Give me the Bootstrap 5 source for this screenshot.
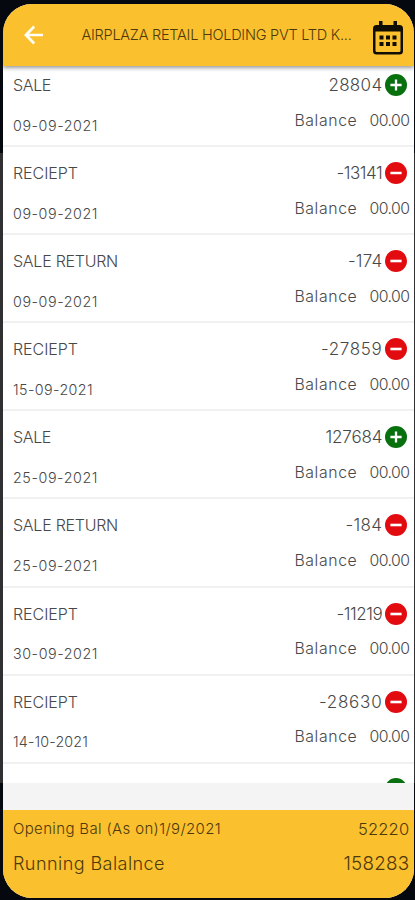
<!DOCTYPE html>
<html lang="en">
<head>
<meta charset="utf-8">
<meta name="viewport" content="width=device-width, initial-scale=1">
<title>Ledger</title>
<link href="https://cdn.jsdelivr.net/npm/bootstrap@5.3.0/dist/css/bootstrap.min.css" rel="stylesheet">
<style>
body{background:linear-gradient(#05080f 0 153px,#303033 153px 783px,#05080f 783px);height:900px;overflow:hidden;font-family:Inter,"Open Sans",sans-serif;font-weight:300;color:#484848}
.screen{height:894.5px;margin:3.5px .6px 2px 2.5px;border-radius:29px;background:#fff}
.topbar{height:62px;flex:none;background:#fbc02d;box-shadow:0 2px 4px rgba(0,0,0,.4);z-index:2;padding:0 11px 0 20px}
.party{font-size:14.5px;color:#4d390c;width:270px;margin-left:38px;line-height:20px;white-space:nowrap}
.cal{margin:6px 0 0 auto}
.entries{height:725px;margin-top:-7.5px;flex:none}
.entry{height:88.1px;flex:none;padding:14px 5px 0 10.5px}
.entry+.entry{box-shadow:inset 0 1px #f1f1f1,0 -1px #f1f1f1}
.entry:last-child{padding-top:15px}
.kind{font-size:16px;line-height:26px}
.day{font-size:14.3px;line-height:20px;margin-top:17.5px}
.amount{font-size:17px;line-height:26px;padding-right:2px;min-height:26px}
.amount svg{margin-left:3px}
.bal{font-size:15.8px;line-height:20px;margin-top:12.5px;gap:12px}
.gap-strip{height:27px;flex:none;background:#f4f4f4}
.totals{background:#fbc02d;color:#4d390c;padding:6px 5px 0 10.5px}
.opening{font-size:15px;line-height:26px}
.opening b{font-size:16.5px}
.running{font-size:18px;line-height:26px;margin-top:9px}
.running b{font-size:18.8px}
.totals b{font-weight:300}
.fit{display:inline-block;white-space:nowrap}
</style>
<script src="https://cdn.jsdelivr.net/npm/bootstrap@5.3.0/dist/js/bootstrap.bundle.min.js"></script>
</head>
<body>
<svg class="d-none">
<symbol id="plus" viewBox="0 0 22 22"><circle cx="11" cy="11" r="11" fill="#08700f"/><path d="M11 5.4v11.2M5.4 11h11.2" stroke="#fff" stroke-width="2.3"/></symbol>
<symbol id="minus" viewBox="0 0 22 22"><circle cx="11" cy="11" r="11" fill="#e20b10"/><path d="M5.4 11h11.2" stroke="#fff" stroke-width="2.6"/></symbol>
</svg>
<main class="screen d-flex flex-column overflow-hidden">
<header class="topbar d-flex align-items-center position-relative">
<svg width="21" height="20" viewBox="0 0 21 20" fill="none" stroke="#fffdf5" stroke-width="2.7"><path d="M20 10H4M11.200 1.500 2.900 10l8.300 8.500"/></svg>
<div class="party"><span data-w="270">AIRPLAZA RETAIL HOLDING PVT LTD K...</span></div>
<svg class="cal" width="30" height="34" viewBox="0 0 30 34"><path fill="#100d05" fill-rule="evenodd" d="M6 0h3.500v4h11V0H24v4h2.500Q30 4 30 7.500V30q0 3.500-3.500 3.500h-23Q0 33.500 0 30V7.500Q0 4 3.500 4H6zM2.500 10.500V29.500q0 1.500 1.500 1.500h22q1.500 0 1.500-1.500v-19zM6.500 14.500h4v4h-4zm6.500 0h4v4h-4zm6.500 0h4v4h-4zM6.500 21h4v4h-4zm6.500 0h4v4h-4zm6.500 0h4v4h-4z"/></svg>
</header>
<section class="entries d-flex flex-column overflow-hidden" id="entries"></section>
<div class="gap-strip"></div>
<footer class="totals flex-grow-1">
<div class="opening d-flex justify-content-between"><span data-w="208">Opening Bal (As on)1/9/2021</span><b data-w="51.5">52220</b></div>
<div class="running d-flex justify-content-between"><span data-w="152">Running Balalnce</span><b data-w="66">158283</b></div>
</footer>
</main>
<script>
// kind, kind width, date, date width, amount, amount width
const rows=[["SALE",38,"09-09-2021",85,"28804",54],["RECIEPT",65,"09-09-2021",85,"-13141",46],["SALE RETURN",105,"09-09-2021",85,"-174",34.5],["RECIEPT",65,"15-09-2021",80,"-27859",61.5],["SALE",38,"25-09-2021",85,"127684",57],["SALE RETURN",105,"25-09-2021",85,"-184",37],["RECIEPT",65,"30-09-2021",85,"-11219",46],["RECIEPT",65,"14-10-2021",75,"-28630",63.5]];
document.getElementById("entries").innerHTML=rows.map(r=>`<article class="entry d-flex justify-content-between"><div><div class="kind"><span data-w="${r[1]}">${r[0]}</span></div><div class="day"><span data-w="${r[3]}">${r[2]}</span></div></div><div><div class="amount d-flex align-items-center justify-content-end"><span data-w="${r[5]}">${r[4]}</span><svg width="22" height="22"><use href="#${r[4][0]==="-"?"minus":"plus"}"/></svg></div><div class="bal d-flex justify-content-end"><span data-w="63">Balance</span><span data-w="40">00.00</span></div></div></article>`).join("")+'<article class="entry d-flex justify-content-end"><div class="amount"><svg class="d-block" width="22" height="22"><use href="#plus"/></svg></div></article>';
document.querySelectorAll("[data-w]").forEach(e=>{e.classList.add("fit");const n=e.textContent.length,w=e.getBoundingClientRect().width;e.style.letterSpacing=(e.dataset.w-w)/n+"px"});
</script>
</body>
</html>
